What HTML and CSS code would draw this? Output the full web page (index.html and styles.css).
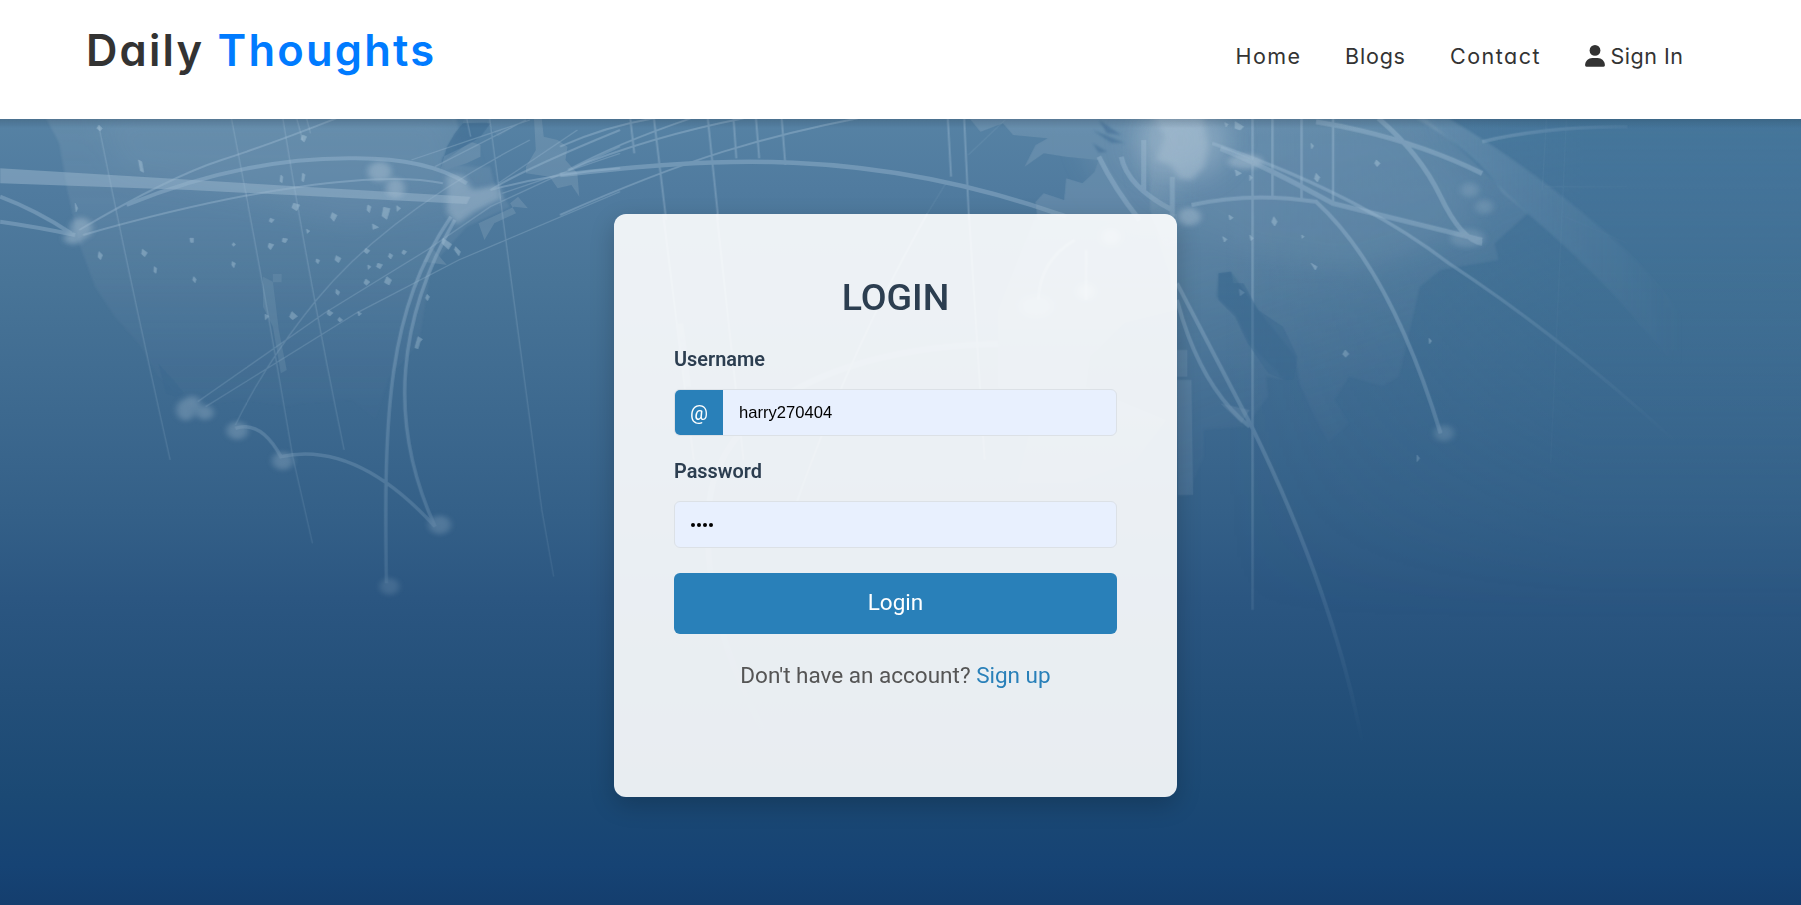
FILE: index.html
```html
<!DOCTYPE html>
<html lang="en">
<head>
<meta charset="utf-8">
<title>Daily Thoughts - Login</title>
<link rel="stylesheet" href="styles.css">
</head>
<body>
<header class="header">
  <a class="logo"><span class="logo-daily">Daily</span> <span class="logo-accent">Thoughts</span></a>
  <nav class="nav">
    <a class="nav-home">Home</a>
    <a class="nav-blogs">Blogs</a>
    <a class="nav-contact">Contact</a>
    <a class="nav-sign"><svg class="user-icon" viewBox="0 0 20 22"><circle cx="10" cy="5.4" r="5.4"/><path d="M7.4 13h5.2c4 0 7.3 3.200 7.300 7.100 0 1.100-.5 1.700-1.400 1.700H1.500C.6 21.800.1 21.200.1 20.100.1 16.200 3.400 13 7.400 13z"/></svg><span>Sign In</span></a>
  </nav>
</header>
<main class="hero">
  <svg class="backdrop" viewBox="0 119 1801 786" preserveAspectRatio="none">
    <defs>
      <linearGradient id="sky" x1="0" y1="0" x2="0" y2="1">
        <stop offset="0" stop-color="#5682a4"/><stop offset=".09" stop-color="#507b9f"/>
        <stop offset=".21" stop-color="#487497"/><stop offset=".37" stop-color="#3d698f"/>
        <stop offset=".5" stop-color="#346088"/><stop offset=".61" stop-color="#2b5681"/>
        <stop offset=".74" stop-color="#234f79"/><stop offset=".86" stop-color="#1b4974"/>
        <stop offset=".95" stop-color="#164374"/><stop offset="1" stop-color="#143e6e"/>
      </linearGradient>
      <linearGradient id="shade" x1="0" y1="0" x2="1" y2="0">
        <stop offset=".68" stop-color="#2c648d" stop-opacity="0"/><stop offset=".88" stop-color="#2c648d" stop-opacity=".4"/>
      </linearGradient>
      <linearGradient id="shadeDown" x1="0" y1="0" x2="0" y2="1"><stop offset="0" stop-color="#fff"/><stop offset="1" stop-color="#000"/></linearGradient>
      <mask id="shadeMask" maskUnits="userSpaceOnUse" x="0" y="119" width="1801" height="500"><rect x="0" y="119" width="1801" height="500" fill="url(#shadeDown)"/></mask>
      <linearGradient id="fadeDown" x1="0" y1="0" x2="0" y2="1">
        <stop offset="0" stop-color="#fff"/><stop offset=".2" stop-color="#e4e4e4"/><stop offset=".35" stop-color="#aaa"/><stop offset=".5" stop-color="#888"/><stop offset=".65" stop-color="#444"/><stop offset=".8" stop-color="#000"/>
      </linearGradient>
      <mask id="fade" maskUnits="userSpaceOnUse" x="0" y="119" width="1801" height="786"><rect x="0" y="119" width="1801" height="786" fill="url(#fadeDown)"/></mask>
      <linearGradient id="landLeft" gradientUnits="userSpaceOnUse" x1="0" y1="0" x2="0" y2="930">
        <stop offset="0" stop-color="#93adc2"/><stop offset=".35" stop-color="#93adc2" stop-opacity=".8"/><stop offset=".75" stop-color="#93a5c0" stop-opacity=".35"/><stop offset="1" stop-color="#93a5c0" stop-opacity=".12"/>
      </linearGradient>
      <linearGradient id="landRight" gradientUnits="userSpaceOnUse" x1="200" y1="100" x2="600" y2="980">
        <stop offset="0" stop-color="#93adc2"/><stop offset=".4" stop-color="#93adc2" stop-opacity=".65"/><stop offset="1" stop-color="#93a5c0" stop-opacity=".15"/>
      </linearGradient>
      <linearGradient id="ltr" x1="0" y1="0" x2="1" y2="0"><stop offset=".4" stop-color="#fff"/><stop offset=".82" stop-color="#000"/></linearGradient>
      <mask id="fadeRight" maskUnits="userSpaceOnUse" x="0" y="0" width="1568" height="2500"><rect width="1568" height="2500" fill="url(#ltr)"/></mask>
      <filter id="soft" filterUnits="userSpaceOnUse" x="-100" y="-100" width="1800" height="1800"><feGaussianBlur stdDeviation="8"/></filter>
      <filter id="wide" filterUnits="userSpaceOnUse" x="-200" y="-200" width="2100" height="1400"><feGaussianBlur stdDeviation="36"/></filter>
      <filter id="edge" filterUnits="userSpaceOnUse" x="0" y="0" width="1600" height="1300"><feGaussianBlur stdDeviation="3"/></filter>
      <linearGradient id="top" x1="0" y1="0" x2="0" y2="1"><stop offset="0" stop-color="#234" stop-opacity=".22"/><stop offset="1" stop-color="#234" stop-opacity="0"/></linearGradient>
    </defs>
    <rect x="0" y="119" width="1801" height="786" fill="url(#sky)"/>
    <rect x="0" y="119" width="1801" height="500" fill="url(#shade)" mask="url(#shadeMask)"/>
    <g mask="url(#fade)" class="map">
      <!-- North America -->
      <g transform="translate(0 110) scale(.3954 .3333)">
        <g class="land">
          <path fill="url(#landLeft)" opacity=".75" filter="url(#edge)" d="M105 0 150 100 170 240 200 400 240 530 290 620 350 700 400 800 450 850 540 880 620 870 730 890 760 880 890 870 950 930 985 800 1060 700 1090 470 1180 350 1290 290 1250 220 1240 170 1200 170 1110 160 1140 90 1160 60 1150 0z"/>
          <path filter="url(#wide)" opacity=".85" d="M260 20H1120L1180 240 900 340 300 180z"/>
          <path d="M1170 40 1230 35 1260 80 1340 20 1345 0H1180z" opacity=".4"/>
          <path d="M1350 20 1370 25 1375 80 1410 90 1435 110 1430 150 1460 190 1465 260 1445 225 1410 235 1390 200 1330 190 1330 170 1355 120z"/>
          <path d="M1190 95 1215 105 1215 140 1180 160 1125 180 1120 155z"/>
          <path d="M1210 340 1225 390 1250 340 1305 310 1290 280 1310 260 1335 295 1300 290z"/>
          <path d="M665 500 690 515 705 660 725 780 710 790 690 650 665 590z"/>
          <path d="M690 492h22v25h-22zM1090 410 1130 465 1070 455z"/>
        </g>
        <path class="deep" d="M400 760 445 820 465 850 445 860 420 850zM1150 70 1170 40 1240 40 1215 80 1190 100 1120 140 1110 190 1130 110z"/>
        <g class="line thin">
          <path d="M250 50Q330 520 430 1050M585 25Q660 480 740 1040L790 1300M715 25Q780 500 870 1020M750 25 765 90M775 25 785 70M1180 25 1190 80M1238 25Q1290 480 1370 1200L1400 1400M500 875 820 610 1080 420 1240 290 1568 110M520 890 900 610 1160 450 1568 245M595 945Q670 760 800 570 980 310 1340 90M1040 150 1340 30M1260 220 1460 60M1270 250 1568 130M1100 170 1330 30"/>
        </g>
        <g class="line">
          <path stroke-width="2" d="M200 360Q430 200 560 150T850 25M210 375Q520 270 760 230T1120 220M1240 240Q1320 180 1568 60M1240 240Q1400 190 1568 175"/>
          <path stroke-width="4" d="M0 260Q90 300 180 370M0 335Q90 350 190 375M320 285Q620 140 900 145 1080 145 1180 220"/>
          <path stroke-width="3.5" d="M1140 320C980 600 970 900 977 1420M1150 330C980 680 1000 990 1100 1250M595 955Q660 930 710 1040 900 990 1100 1250"/>
        </g>
        <path class="beam" d="M0 175 460 208 1190 260 1180 282 480 240 0 220z"/>
        <g class="glow" filter="url(#soft)"><ellipse cx="205" cy="355" rx="28" ry="32"/><ellipse cx="185" cy="385" rx="24" ry="18"/><ellipse cx="470" cy="900" rx="24" ry="32"/><circle cx="485" cy="880" r="22"/><circle cx="518" cy="908" r="22"/><circle cx="600" cy="962" r="27"/><circle cx="715" cy="1053" r="27"/><circle cx="1112" cy="1245" r="28"/><circle cx="985" cy="1430" r="25"/><circle cx="960" cy="185" r="30"/><ellipse cx="1000" cy="235" rx="24" ry="30"/><path d="M1130 195l40 0 25 45 65-15 10 40-70 40-45 40-25-40z"/></g>
        <g class="dots"><path d="M250 45l8 10-5 8-8-8zM350 150l8 5 5 32-8-5zM765 75l10 5-6 16-8-8zM480 385h9v12h-7zM360 418l12 10-6 12-8-8zM250 425l9 10-5 14-6-8zM390 470l6 5-2 15-5-5zM490 500l6 8-3 10-6-8zM587 455l8 5-4 13-5-8zM680 400l12 4-8 15-6-8zM715 385l12 2-5 11-8-3zM742 280l16 5-8 17-12-9zM840 308l12 8-8 18-8-12zM683 325l10 4-6 9-6-4zM590 398l5 5-4 6-4-4zM800 447l8 4-4 10-5-6zM850 437l12 8-6 13-9-8zM925 415l10 7-7 9-7-6zM985 430l8 6-5 11-6-7zM955 460l12 4-6 12-9-6zM930 285l8 5-4 18-6-8zM970 292l16 4-8 32-12-10zM1003 287l10 8-9 9zM1020 420l8 5-6 9-6-5zM978 500l12 10-6 15-12-8zM925 507l10 9-8 10-7-7zM850 538l9 8-4 10-6-7zM738 605l14 14-12 10-8-8zM830 600l12 9-8 9-7-6zM858 622l8 8-7 6-5-6zM905 605l9 6-7 7zM1080 553l6 7-5 12-5-8zM1057 680l11 8-6 8-5 20-8-3zM942 342l15 10-14 6zM930 465l8 5-7 8zM670 613l10 6-9 10zM775 358l8 5-6 7zM710 195l5 5-2 18-5-4zM765 190l6 4-4 22-4-5zM1120 385l22 18-8 15-16-18zM1152 410l12 15-4 12-11-18zM190 280l6 15-4 10z"/></g>
      </g>
      <!-- Atlantic -->
      <g transform="translate(560 110) scale(.4082 .3333)">
        <g class="line">
          <path stroke-width="2" d="M172 25 182 130M230 25 260 330M362 25 388 330M425 25 432 145M480 25 488 145M543 25 552 165M950 25 958 200M990 25 1002 330"/>
          <path class="thin" d="M1090 30 1000 135M945 220 890 330"/>
          <path stroke-width="2" d="M0 110Q110 50 230 25M20 180Q140 100 320 25M20 180Q220 80 450 25M0 315Q230 190 400 125 560 65 730 25"/>
          <path stroke-width="4.500" d="M0 195C360 145 750 105 1240 320"/>
        </g>
        <g class="land"><path d="M1000 20 1030 65 1085 40 1110 75 1195 85 1165 105 1138 170 1185 130 1240 140 1320 150 1310 185 1280 220 1240 205 1235 270 1185 250 1165 275 1170 330H1445V20z"/><path filter="url(#wide)" d="M1300 0h200v330h-110l-100-200z"/></g>
        <g class="line"><path stroke-width="5" d="M1320 140Q1360 240 1420 330M1375 140Q1390 230 1500 300M1430 90V240M1500 200V320"/></g>
        <path class="deep" filter="url(#edge)" d="M1305 60 1385 100 1350 98zM1320 30 1375 75 1340 70zM1305 100 1340 125 1320 128z"/>
      </g>
      <!-- behind the card -->
      <g transform="translate(600 200) scale(.3827 .3333)">
        <g class="line"><path stroke-width="2" d="M165 42 245 780M305 42 375 780M855 42Q650 460 510 920M964 42 1005 780"/><path stroke-width="6" opacity=".7" d="M1040 432C600 440 300 640 285 920Q260 1250 440 1620M210 370 230 560"/><path stroke-width="3" d="M1240 120Q1150 180 1145 300M1270 150V300"/></g>
        <g class="land"><path d="M1140 42 1508 42 1508 330 1370 370 1280 470 1270 560 1480 660 1400 780 1240 850 1090 850 1130 660 1040 560 1040 330z" opacity=".6"/></g>
        <g class="glow" filter="url(#soft)"><circle cx="1335" cy="110" r="24"/><circle cx="1270" cy="275" r="24"/><ellipse cx="1140" cy="320" rx="45" ry="35" opacity=".6"/></g>
      </g>
      <!-- Africa, Middle East, Asia -->
      <g transform="translate(1150 110) scale(.4152 .3333)">
        <g class="land">
          <path fill="url(#landRight)" filter="url(#edge)" d="M0 20H660L760 130 910 310 830 400 840 450 700 480 650 530 630 640 600 800 560 830 480 800 445 870 480 940 430 1000 400 930 360 820 350 740 260 600 195 485 165 490 160 560 205 610 240 700 325 810 280 800 285 860 230 950 130 960 130 1040 90 1160 60 1160V800L50 500 0 300z"/>
          <path filter="url(#wide)" d="M0 20H600L780 220 760 380 480 480 220 420 0 220z"/>
        </g>
        <g mask="url(#fadeRight)">
          <g class="beam"><path opacity=".6" filter="url(#edge)" d="M640 25H720Q930 180 1130 400 1300 600 1400 840L1240 740Q1100 500 850 250 790 130 640 25z"/></g>
          <g class="line"><path stroke-width="3.500" d="M150 100Q500 250 720 460 1000 690 1270 1000M800 95Q950 50 1150 50"/><path class="thin" d="M955 25 945 240M1003 25 965 1060M950 230H1150M1000 320 1150 400"/></g>
        </g>
        <g class="line">
          <path stroke-width="2.500" d="M247 25V1500M295 25V265M365 25V275M441 25V275"/>
          <path stroke-width="5" d="M170 115Q280 170 440 280L800 390M400 35Q620 80 800 190M550 25Q650 130 700 260T800 400"/>
          <path stroke-width="4" d="M100 285Q240 245 400 275 580 480 700 970M65 520 245 950Q500 1600 540 2150M65 570Q120 830 240 950"/>
        </g>
        <g class="land"><path d="M65 810H100L104 1155H68zM65 720 90 720V800H65zM170 880 240 900 220 940z"/></g>
        <g class="glow" filter="url(#soft)"><path d="M10 20 40 0 125 10 140 110 130 170 100 210 70 205 50 165 15 150 35 80z"/><circle cx="95" cy="320" r="27"/><ellipse cx="230" cy="155" rx="42" ry="22"/><circle cx="770" cy="240" r="22" opacity=".5"/><circle cx="805" cy="290" r="22" opacity=".5"/><ellipse cx="765" cy="385" rx="42" ry="28" opacity=".5"/><circle cx="708" cy="970" r="24" opacity=".7"/></g>
        <ellipse class="glow" filter="url(#wide)" cx="75" cy="90" rx="110" ry="120"/>
        <g class="dots"><path d="M180 38l8 5-5 8zM205 35l20 15-8 10-12-5zM388 100l6 8-5 8zM545 150l9 10-7 10-6-10zM400 190l9 12-6 14-7-10zM298 320l8 15-6 13-7-12zM190 315l10 8-8 7zM175 380l10 8-6 8zM240 375l9 10-6 7zM365 375l6 5-5 5zM388 460l14 10-4 10zM470 720l9 12-8 10-7-9zM672 685l6 8-5 8zM643 1035l6 10-6 10zM205 180l15 10-12 8zM240 195l6 8-6 9zM215 538l12 10-10 9z"/></g>
        <path class="deep" d="M165 490 195 485 200 520 225 520 260 600 320 650 355 740 345 810 325 810 285 790 235 700 205 620 165 570z"/>
      </g>
    </g>
    <rect x="0" y="119" width="1801" height="9" fill="url(#top)"/>
  </svg>
  <form class="card">
    <h1 class="title">LOGIN</h1>
    <label class="label">Username</label>
    <div class="field"><span class="at">@</span><span class="value">harry270404</span></div>
    <label class="label">Password</label>
    <div class="field"><span class="value password"><i></i><i></i><i></i><i></i></span></div>
    <button class="submit" type="button">Login</button>
    <p class="signup">Don't have an account? <a>Sign up</a></p>
  </form>
</main>
</body>
</html>
```
FILE: styles.css
```css
* { box-sizing: border-box; }
body { margin: 0; height: 905px; overflow: hidden; font-family: Roboto, sans-serif; background: #143e6e; }
.header { height: 119px; padding: 0 118px 0 86px; background: #fff; display: flex; justify-content: space-between; font-family: Inter, "Open Sans", sans-serif; font-feature-settings: "cv11"; color: #333; }
.logo { padding-top: 24px; font-size: 43.500px; line-height: 53px; font-weight: 600; letter-spacing: 2.200px; white-space: nowrap; }
.logo-accent { color: #007bff; }
.nav { display: flex; gap: 45px; padding-top: 43px; font-size: 21.5px; line-height: 27px; }
.nav-home { letter-spacing: 1.400px; margin-right: -1.400px; }
.nav-blogs { letter-spacing: .8px; margin-right: -.8px; }
.nav-contact { letter-spacing: 1.500px; margin-right: -1.500px; }
.nav-sign { display: flex; gap: 6px; letter-spacing: .5px; margin-right: -.5px; }
.user-icon { width: 20px; height: 22px; margin-top: 2px; fill: #333; }
.hero { position: relative; height: 786px; padding: 95px 10px 0 0; display: flex; justify-content: center; align-items: flex-start; }
.backdrop { position: absolute; left: 0; top: 0; width: 100%; height: 100%; }
.map path { vector-effect: non-scaling-stroke; }
.land { fill: #93adc2; opacity: .3; }
.line { fill: none; stroke: #a0bdd3; stroke-width: 1.5; opacity: .42; }
.thin { stroke-width: 1.3; opacity: .34; }
.beam { fill: #9db9cf; opacity: .5; }
.glow { fill: #a9c0d2; opacity: .52; }
.dots { fill: #a9c5d8; stroke: #a9c5d8; stroke-width: .8; opacity: .5; }
.deep { fill: #37658f; opacity: .45; }
.card { position: relative; width: 563px; height: 583px; padding: 60px; border-radius: 12px; background: rgba(255,255,255,.9); box-shadow: 0 8px 24px rgba(0,0,0,.2); color: #2c3e50; }
.title { margin: 0 0 27px; font-size: 37.500px; line-height: 46px; font-weight: 500; text-align: center; }
.label { display: block; margin-bottom: 16px; font-size: 19.900px; line-height: 26px; font-weight: 600; }
.field { height: 47px; margin-bottom: 23px; display: flex; border: 1px solid #dce1e6; border-radius: 6px; background: #e8f0fe; overflow: hidden; }
.at { width: 48px; background: #2980b9; color: #fff; font-size: 20px; line-height: 46px; text-align: center; }
.value { display: flex; align-items: center; padding-left: 16px; color: #000; font-family: "Liberation Sans", Arial, sans-serif; font-size: 16.600px; }
.password { gap: 2px; }
.password i { width: 4px; height: 4px; border-radius: 50%; background: #000; }
.submit { display: block; width: 100%; height: 61px; margin-top: 25px; padding: 0 0 3px; border: 0; border-radius: 6px; background: #2980b9; color: #fff; font: 22.500px Roboto, sans-serif; }
.signup { margin: 27px 0 0; text-align: center; font-size: 22.500px; line-height: 28px; color: #555; }
.signup a { color: #2980b9; }
```
